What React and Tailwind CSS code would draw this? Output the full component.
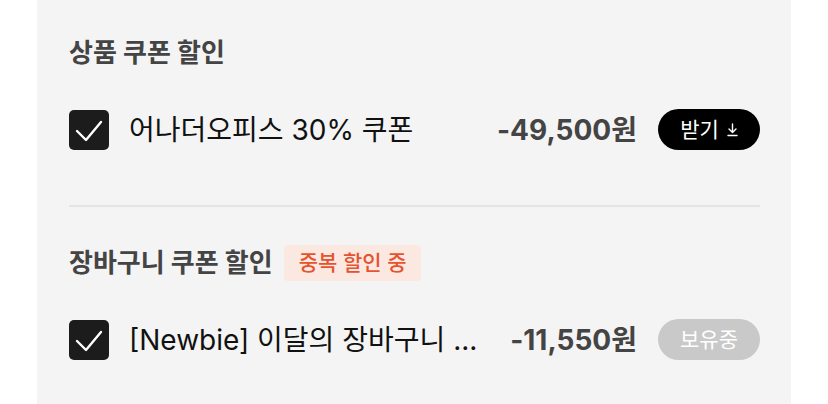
import React from 'react';

const font = { fontFamily: 'Inter, "Noto Sans CJK KR", sans-serif' };

const CheckBox = () => (
  <div className="w-10 h-10 shrink-0 rounded-[5px] bg-[#1c1c1c] flex items-center justify-center">
    <svg width="40" height="40" viewBox="0 0 40 40" fill="none">
      <polyline points="8,21 17,30 32,12" stroke="#fff" strokeWidth="2.4" strokeLinecap="round" strokeLinejoin="round" />
    </svg>
  </div>
);

const DownloadArrow = () => (
  <svg width="11" height="15" viewBox="0 0 11 15" fill="none" className="ml-2">
    <path d="M5.5 2v8.5M2 7l3.5 3.5L9 7M1 13.5h9" stroke="#fff" strokeWidth="1.4" strokeLinecap="round" strokeLinejoin="round" />
  </svg>
);

const CouponRow = ({ title, amount, action }) => (
  <div className="flex items-center h-[41px]">
    <CheckBox />
    <span className="ml-5 flex-1 min-w-0 truncate text-[28px] leading-9 text-[#111]">{title}</span>
    <span className="text-[28px] leading-9 font-bold text-[#444]">{amount}</span>
    {action}
  </div>
);

const App = () => {
  return (
    <div className="bg-white w-[828px] h-[404px] overflow-hidden px-[37px]" style={font}>
      <div className="bg-[#f4f4f4] h-full pl-8 pr-[31px] pt-[37px]">
        {/* Product coupons */}
        <h2 className="text-[26px] leading-8 font-bold text-[#444]">상품 쿠폰 할인</h2>
        <div className="mt-10">
          <CouponRow
            title="어나더오피스 30% 쿠폰"
            amount="-49,500원"
            action={
              <button className="ml-[21px] w-[102px] h-[41px] rounded-full bg-black text-white text-[21px] flex items-center justify-center">
                받기
                <DownloadArrow />
              </button>
            }
          />
        </div>

        <div className="mt-[55px] h-[2px] bg-[#e4e4e4]" />

        {/* Cart coupons */}
        <div className="mt-[38px] flex items-center h-9">
          <h2 className="text-[26px] leading-8 font-bold text-[#444]">장바구니 쿠폰 할인</h2>
          <span className="ml-[11px] h-9 px-[15px] rounded-[4px] bg-[#fbe8e1] text-[#e5532f] text-[21px] font-medium flex items-center">
            중복 할인 중
          </span>
        </div>
        <div className="mt-[38px]">
          <CouponRow
            title="[Newbie] 이달의 장바구니 ..."
            amount="-11,550원"
            action={
              <span className="ml-[21px] w-[102px] h-[41px] rounded-full bg-[#c9c9c9] text-white text-[21px] flex items-center justify-center">
                보유중
              </span>
            }
          />
        </div>
      </div>
    </div>
  );
};

export default App;
